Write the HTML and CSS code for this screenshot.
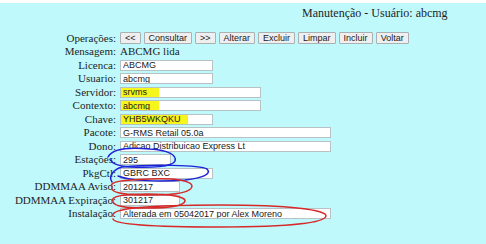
FILE: index.html
```html
<!DOCTYPE html>
<html lang="pt">
<head>
  <meta charset="UTF-8" />
  <title>Manutenção - Usuário</title>
  <link rel="stylesheet" href="styles.css">
</head>
<body>

  <div class="topbar"></div>
  <h1 class="title">Manutenção - Usuário: abcmg</h1>

  <form class="form">
    <span class="lbl">Operações:</span>
    <div class="ops">
      <button type="button">&lt;&lt;</button>
      <button type="button">Consultar</button>
      <button type="button">&gt;&gt;</button>
      <button type="button">Alterar</button>
      <button type="button">Excluir</button>
      <button type="button">Limpar</button>
      <button type="button">Incluir</button>
      <button type="button">Voltar</button>
    </div>

    <span class="lbl">Mensagem:</span>
    <span class="msg">ABCMG lida</span>

    <label class="lbl" for="licenca">Licenca:</label>
    <input id="licenca" class="fld w-lg" value="ABCMG" />

    <label class="lbl" for="usuario">Usuario:</label>
    <input id="usuario" class="fld w-lg" value="abcmg" />

    <label class="lbl" for="servidor">Servidor:</label>
    <input id="servidor" class="fld w-xl mark-short" value="srvms" />

    <label class="lbl" for="contexto">Contexto:</label>
    <input id="contexto" class="fld w-xl mark-short" value="abcmg" />

    <label class="lbl" for="chave">Chave:</label>
    <input id="chave" class="fld w-lg mark-long" value="YHB5WKQKU" />

    <label class="lbl" for="pacote">Pacote:</label>
    <input id="pacote" class="fld w-xxl" value="G-RMS Retail 05.0a" />

    <label class="lbl" for="dono">Dono:</label>
    <input id="dono" class="fld w-xxl" value="Adicao Distribuicao Express Lt" />

    <label class="lbl" for="estacoes">Estações:</label>
    <input id="estacoes" class="fld w-sm" value="295" />

    <label class="lbl" for="pkgctl">PkgCtl:</label>
    <input id="pkgctl" class="fld w-lg" value="GBRC BXC" />

    <label class="lbl" for="aviso">DDMMAA Aviso:</label>
    <input id="aviso" class="fld w-md" value="201217" />

    <label class="lbl" for="expira">DDMMAA Expiração:</label>
    <input id="expira" class="fld w-md" value="301217" />

    <label class="lbl" for="instala">Instalação:</label>
    <input id="instala" class="fld w-xxl" value="Alterada em 05042017 por Alex Moreno" />
  </form>

  <!-- marcas feitas a mao por cima da tela -->
  <svg class="marks" width="486" height="244" viewBox="0 0 486 244">
    <g fill="none" stroke-width="1.5" stroke-linecap="round">
      <path class="blue" d="M108 157 C112 149 128 147 150 149 C168 150 177 155 175 161 C173 167 150 168 130 167 C118 166 110 163 111 159" />
      <path class="blue" d="M112 182 C108 176 114 169 122 167 C150 164 200 165 207 169 C212 174 203 178 185 180 C160 182 130 181 118 176" />
      <path class="red" d="M112 187 C108 181 125 180 150 179 C176 178 192 181 192 186 C192 192 176 195 150 195 C128 195 113 193 112 189" />
      <path class="red" d="M113 201 C110 196 125 194 148 194 C170 194 186 197 185 201 C184 206 168 208 146 208 C126 208 114 206 113 202" />
      <path class="red" d="M113 216 C110 208 150 205 220 205 C290 205 327 210 326 216 C325 222 295 227 220 227 C160 227 115 225 113 219" />
    </g>
  </svg>

</body>
</html>
```

FILE: styles.css
```css
body {
  margin: 0;
  background: #c0f9fb;
  color: #1e1e1e;
  font-family: "Liberation Serif", "Times New Roman", serif;
  position: relative;
  height: 244px;
  overflow: hidden;
}
.topbar {
  height: 3px;
  background: #ffffff;
}
.title {
  margin: 0;
  padding: 3px 0 0 302px;
  font-size: 12px;
  line-height: 15px;
  font-weight: normal;
}
.form {
  display: grid;
  grid-template-columns: 116px auto;
  grid-template-rows: 14px;
  grid-auto-rows: 13.5px;
  column-gap: 4px;
  align-items: center;
  margin-top: 10px;
}
.lbl {
  text-align: right;
  font-size: 11px;
  line-height: 13px;
  white-space: nowrap;
}
.msg {
  font-size: 11px;
  line-height: 13px;
}
.ops {
  display: flex;
  gap: 3px;
}
.ops button {
  height: 12px;
  padding: 0 4px;
  font-family: "Liberation Sans", Arial, sans-serif;
  font-size: 9px;
  line-height: 10px;
  color: #222;
  background: #efefef;
  border: 1px solid #a9b1b2;
  border-radius: 1px;
}
.fld {
  justify-self: start;
  box-sizing: border-box;
  height: 11px;
  margin: 0;
  padding: 0 2px;
  font-family: "Liberation Sans", Arial, sans-serif;
  font-size: 9px;
  line-height: 9px;
  color: #1a1a1a;
  background: #ffffff;
  border: 1px solid #b8c2c4;
}
.w-sm { width: 51px; }
.w-md { width: 60px; }
.w-lg { width: 93px; }
.w-xl { width: 141px; }
.w-xxl { width: 211px; }
.mark-short {
  background: linear-gradient(to right, #f6f51c 0 38px, #ffffff 38px);
}
.mark-long {
  background: linear-gradient(to right, #f6f51c 0 67px, #ffffff 67px);
}
.marks {
  position: absolute;
  top: 0;
  left: 0;
  pointer-events: none;
}
.marks .blue {
  stroke: #1f22d8;
}
.marks .red {
  stroke: #d82828;
}
```
